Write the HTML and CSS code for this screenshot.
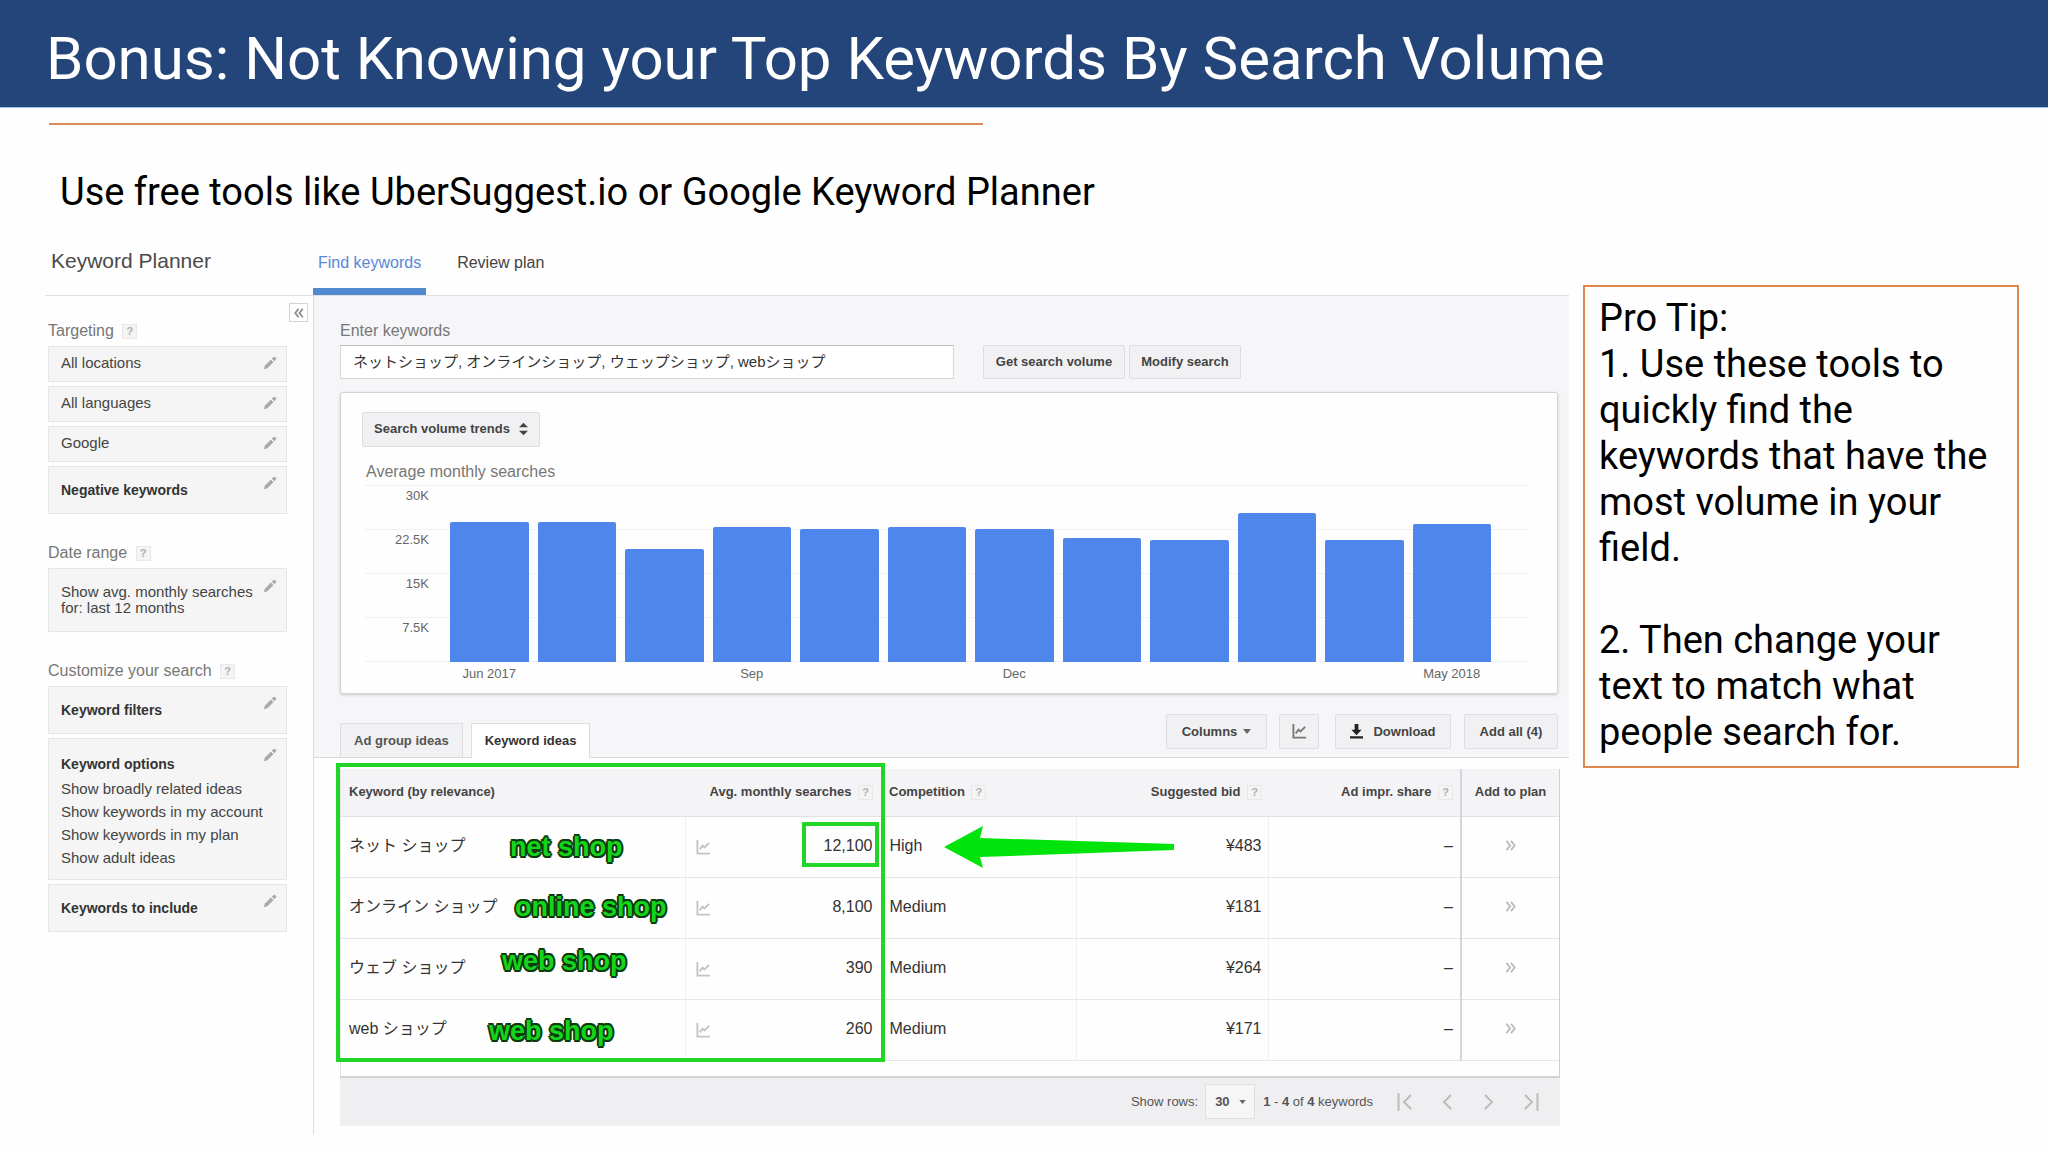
FILE: index.html
```html
<!DOCTYPE html>
<html lang="en">
<head>
<meta charset="utf-8">
<title>Bonus: Not Knowing your Top Keywords By Search Volume</title>
<link rel="stylesheet" href="styles.css">
</head>
<body>
<svg class="defs" aria-hidden="true">
  <symbol id="pencil" viewBox="0 0 16 16"><path d="M1 15l1-4 7-7 3 3-7 7zM10 3l2-2q1-.6 2 .3l.8.8q.8 1 0 1.8L13 6z"/></symbol>
  <symbol id="graph" viewBox="0 0 16 16"><path d="M1.500 0v14.500H15M4 10l3-4 2 2 5-5" fill="none" stroke="currentColor" stroke-width="2"/></symbol>
  <symbol id="caret" viewBox="0 0 8 5"><path d="M0 0h8L4 5z"/></symbol>
  <symbol id="plan" viewBox="0 0 12 12"><path d="M1 1l4 5-4 5M6 1l4 5-4 5" fill="none" stroke="currentColor" stroke-width="2"/></symbol>
</svg>

<header class="title-bar"><h1>Bonus: Not Knowing your Top Keywords By Search Volume</h1></header>
<hr class="rule">
<p class="subtitle">Use free tools like UberSuggest.io or Google Keyword Planner</p>

<div class="slide">
  <div class="planner">
    <div class="planner-head">
      <h2>Keyword Planner</h2>
      <nav class="tabs">
        <a class="tab current" href="#find">Find keywords</a>
        <a class="tab" href="#review">Review plan</a>
      </nav>
    </div>

    <aside class="sidebar">
      <button class="collapse" aria-label="Collapse"><svg viewBox="0 0 12 12"><path d="M5.500 1l-4 5 4 5M10.500 1l-4 5 4 5"/></svg></button>
      <section class="group">
        <h3>Targeting <span class="help">?</span></h3>
        <div class="box"><span>All locations</span><button class="edit" aria-label="Edit locations"><svg><use href="#pencil"/></svg></button></div>
        <div class="box"><span>All languages</span><button class="edit" aria-label="Edit languages"><svg><use href="#pencil"/></svg></button></div>
        <div class="box"><span>Google</span><button class="edit" aria-label="Edit network"><svg><use href="#pencil"/></svg></button></div>
        <div class="box tall"><b>Negative keywords</b><button class="edit" aria-label="Edit negative keywords"><svg><use href="#pencil"/></svg></button></div>
      </section>
      <section class="group">
        <h3>Date range <span class="help">?</span></h3>
        <div class="box range"><span>Show avg. monthly searches<br>for: last 12 months</span><button class="edit" aria-label="Edit date range"><svg><use href="#pencil"/></svg></button></div>
      </section>
      <section class="group">
        <h3>Customize your search <span class="help">?</span></h3>
        <div class="box tall"><b>Keyword filters</b><button class="edit" aria-label="Edit filters"><svg><use href="#pencil"/></svg></button></div>
        <div class="box options">
          <div><b>Keyword options</b>
            <ul><li>Show broadly related ideas</li><li>Show keywords in my account</li><li>Show keywords in my plan</li><li>Show adult ideas</li></ul>
          </div>
          <button class="edit" aria-label="Edit options"><svg><use href="#pencil"/></svg></button>
        </div>
        <div class="box tall"><b>Keywords to include</b><button class="edit" aria-label="Edit included keywords"><svg><use href="#pencil"/></svg></button></div>
      </section>
    </aside>

    <main class="main">
      <div class="panel">
        <label class="field-label" for="kw">Enter keywords</label>
        <div class="search">
          <input id="kw" type="text" value="ネットショップ, オンラインショップ, ウェップショップ, webショップ">
          <button class="btn">Get search volume</button>
          <button class="btn">Modify search</button>
        </div>

        <section class="card">
          <button class="btn trends">Search volume trends
            <svg viewBox="0 0 10 14"><path d="M0 5l5-5 5 5zM0 9l5 5 5-5z"/></svg></button>
          <h3>Average monthly searches</h3>
          <div class="chart">
            <div class="scale"><span>30K</span><span>22.5K</span><span>15K</span><span>7.5K</span></div>
            <div class="bars">
              <i style="height:79%"></i><i style="height:79%"></i><i style="height:64%"></i><i style="height:76%"></i><i style="height:75%"></i><i style="height:76%"></i><i style="height:75%"></i><i style="height:70%"></i><i style="height:69%"></i><i style="height:84%"></i><i style="height:69%"></i><i style="height:78%"></i>
            </div>
          </div>
          <div class="months"><span>Jun 2017</span><span></span><span></span><span>Sep</span><span></span><span></span><span>Dec</span><span></span><span></span><span></span><span></span><span>May 2018</span></div>
        </section>

        <div class="result-bar">
          <div class="result-tabs">
            <button class="rtab">Ad group ideas</button>
            <button class="rtab on">Keyword ideas</button>
          </div>
          <div class="tools">
            <button class="btn columns">Columns <svg class="caret"><use href="#caret"/></svg></button>
            <button class="btn icon-only" aria-label="Chart"><svg class="graph"><use href="#graph"/></svg></button>
            <button class="btn download"><svg class="down" viewBox="0 0 14 16"><path d="M5 0h4v6h3.500L7 12 1.500 6H5zM0 13h14v2.500H0z"/></svg>Download</button>
            <button class="btn add-all">Add all (4)</button>
          </div>
        </div>
      </div>

      <div class="results">
        <div class="table-wrap">
          <table>
            <colgroup><col><col class="c-avg"><col class="c-comp"><col class="c-bid"><col class="c-share"><col class="c-plan"></colgroup>
            <thead><tr>
              <th>Keyword (by relevance)</th>
              <th class="num">Avg. monthly searches <span class="help">?</span></th>
              <th class="comp">Competition <span class="help">?</span></th>
              <th class="num bid">Suggested bid <span class="help">?</span></th>
              <th class="num share">Ad impr. share <span class="help">?</span></th>
              <th class="plan">Add to plan</th>
            </tr></thead>
            <tbody>
              <tr><td>ネット ショップ<span class="note n1">net shop</span></td><td class="num"><svg class="graph"><use href="#graph"/></svg>12,100<span class="mark"></span></td><td class="comp">High<svg class="arrow" viewBox="0 0 230 42"><path d="M0 21L39 0l-3 12 194 6v6L36 31l3 11z"/></svg></td><td class="num bid">¥483</td><td class="num share">–</td><td class="plan"><svg><use href="#plan"/></svg></td></tr>
              <tr><td>オンライン ショップ<span class="note n2">online shop</span></td><td class="num"><svg class="graph"><use href="#graph"/></svg>8,100</td><td class="comp">Medium</td><td class="num bid">¥181</td><td class="num share">–</td><td class="plan"><svg><use href="#plan"/></svg></td></tr>
              <tr><td>ウェブ ショップ<span class="note n3">web shop</span></td><td class="num"><svg class="graph"><use href="#graph"/></svg>390</td><td class="comp">Medium</td><td class="num bid">¥264</td><td class="num share">–</td><td class="plan"><svg><use href="#plan"/></svg></td></tr>
              <tr><td>web ショップ<span class="note n4">web shop</span></td><td class="num"><svg class="graph"><use href="#graph"/></svg>260</td><td class="comp">Medium</td><td class="num bid">¥171</td><td class="num share">–</td><td class="plan"><svg><use href="#plan"/></svg></td></tr>
            </tbody>
          </table>
          <div class="frame"></div>
        </div>
        <div class="pager">
          <label for="rows">Show rows:</label>
          <span class="rows"><select id="rows"><option>30</option></select><svg class="caret"><use href="#caret"/></svg></span>
          <span class="count"><b>1</b> - <b>4</b> of <b>4</b> keywords</span>
          <span class="pages">
            <button aria-label="First page"><svg viewBox="0 0 16 18"><path d="M1.500 0v18M14 2L7 9l7 7"/></svg></button>
            <button aria-label="Previous page"><svg viewBox="0 0 16 18"><path d="M12 2L5 9l7 7"/></svg></button>
            <button aria-label="Next page"><svg viewBox="0 0 16 18"><path d="M4 2l7 7-7 7"/></svg></button>
            <button aria-label="Last page"><svg viewBox="0 0 16 18"><path d="M2 2l7 7-7 7M14.500 0v18"/></svg></button>
          </span>
        </div>
      </div>
    </main>
  </div>

  <aside class="tip">
    <p>Pro Tip:<br>1. Use these tools to quickly find the keywords that have the most volume in your field.</p>
    <p>2. Then change your text to match what people search for.</p>
  </aside>
</div>
</body>
</html>
```
FILE: styles.css
```css
* { box-sizing: border-box; }
body { margin: 0; background: #fdfefd; color: #000; font-family: Roboto, sans-serif; }
h1, h2, h3, p, ul { margin: 0; padding: 0; font-weight: 400; }
ul { list-style: none; }
button, input, select { font: inherit; color: inherit; margin: 0; padding: 0; }
button { border: 0; background: none; cursor: pointer; }
svg { fill: currentColor; flex: none; }
.defs { position: absolute; width: 0; height: 0; }

/* Slide */
.title-bar { background: #234579; border-bottom: 1px solid #9cc3ea; padding: 24px 46px 13px; }
.title-bar h1 { color: #fff; font-size: 60px; line-height: 70px; }
.rule { width: 934px; max-width: 90%; height: 2px; margin: 15px 0 0 49px; border: 0; background: #dd8b5b; }
.subtitle { margin: 44px 0 25px 60px; font-size: 38px; line-height: 46px; }
.slide { display: flex; align-items: flex-start; gap: 14px; padding: 0 29px 0 45px; }
.tip { width: 436px; flex: none; margin-top: 45px; padding: 8px 14px 11px; border: 2px solid #dd8851; font-size: 38px; line-height: 46px; }
.tip p + p { margin-top: 46px; }

/* Planner */
.planner { flex: 1; min-width: 0; display: grid; grid-template-columns: 269px minmax(0, 1fr); font-family: "Liberation Sans", "Noto Sans CJK JP", sans-serif; font-size: 16px; line-height: 20px; color: #444; }
.planner-head { grid-column: 1 / -1; display: flex; border-bottom: 1px solid #e0e1e4; }
.planner-head h2 { width: 268px; padding: 9px 0 0 6px; font-size: 21px; line-height: 24px; color: #4a4a4a; }
.tabs { display: flex; gap: 26px; }
.tab { padding: 13px 5px 15px; border-bottom: 7px solid transparent; color: #444; text-decoration: none; }
.tab.current { border-color: #5089d0; color: #5a86d8; }

.help { display: inline-block; width: 15px; height: 15px; border: 1px solid #e8e8e8; background: #f4f4f4; color: #b0b0b0; font-size: 11px; font-weight: 700; line-height: 13px; text-align: center; vertical-align: middle; }
h3 .help { margin-left: 4px; }

/* Sidebar */
.sidebar { position: relative; padding: 25px 26px 173px 3px; border-right: 1px solid #dcdcde; }
.collapse { position: absolute; top: 7px; right: 5px; width: 19px; height: 19px; display: grid; place-items: center; border: 1px solid #d4d4d4; }
.collapse svg { width: 10px; height: 10px; fill: none; stroke: #888; stroke-width: 2; }
.group { display: flex; flex-direction: column; gap: 4px; margin-bottom: 29px; }
.group h3 { margin-bottom: 1px; font-size: 16px; line-height: 20px; color: #777; white-space: nowrap; }
.box { display: flex; justify-content: space-between; align-items: center; min-height: 36px; padding: 0 9px 2px 12px; border: 1px solid #e6e6e6; background: #f4f5f4; font-size: 15px; line-height: 16px; white-space: nowrap; }
.box b { font-size: 14px; color: #333; }
.box.tall { min-height: 48px; padding-bottom: 0; }
.edit { width: 14px; height: 14px; color: #aaa; }
.edit svg { display: block; width: 14px; height: 14px; }
.tall .edit, .range .edit, .options .edit { align-self: flex-start; margin-top: 9px; }
.range { min-height: 64px; padding-top: 2px; }
.range .edit { margin-top: 8px; }
.options { min-height: 142px; padding: 6px 9px 0 12px; }
.options .edit { margin-top: 3px; }
.options ul { padding-top: 5px; line-height: 23px; }

/* Search panel */
.panel { padding: 25px 11px 0 26px; background: #f6f6f8; border-bottom: 1px solid #d9d9dc; }
.field-label { display: block; margin-bottom: 4px; color: #777; }
.search { display: flex; gap: 4px; margin-bottom: 13px; }
.search input { width: 614px; height: 34px; margin-right: 25px; padding: 0 12px 4px; border: 1px solid #d6d6d8; border-top-color: #c0c0c4; background: #fff; font-size: 15px; color: #333; }
.btn { display: flex; align-items: center; justify-content: center; height: 34px; padding: 0 10px; border: 1px solid #dedee0; border-radius: 2px; background: #f1f1f3; font-size: 13px; font-weight: 700; color: #444; white-space: nowrap; }
.search .btn { width: 112px; }
.search input + .btn { width: 142px; }
.card { padding: 19px 21px 9px; border: 1px solid #d4d4d8; border-radius: 3px; background: #fefefe; box-shadow: 0 1px 3px #c8c8cc; }
.trends { width: 178px; height: 35px; gap: 9px; padding-bottom: 2px; }
.trends svg { width: 9px; height: 14px; }
.card h3 { margin: 15px 0 3px 4px; font-size: 16px; line-height: 20px; color: #777; }
.chart { display: grid; margin: 0 7px 0 3px; }
.scale, .bars { grid-area: 1 / 1; }
.scale { border-bottom: 1px solid #f1f1f3; }
.scale span { display: block; height: 44px; padding-right: calc(100% - 64px); border-top: 1px solid #f1f1f3; font-size: 13px; line-height: 20px; color: #666; text-align: right; }
.bars, .months { display: grid; grid-template-columns: repeat(12, minmax(0, 1fr)); column-gap: 9px; padding: 0 38px 0 85px; }
.bars { align-items: end; }
.bars i { background: #4f86ec; border-radius: 2px 2px 0 0; }
.months { margin: 2px 7px 0 3px; font-size: 13px; line-height: 20px; color: #666; text-align: center; white-space: nowrap; }
.result-bar { display: flex; justify-content: space-between; align-items: flex-end; padding-top: 20px; }
.result-tabs { display: flex; gap: 8px; }
.rtab { height: 34px; padding: 0 13px; border: 1px solid #dedee0; border-bottom: 0; background: #f1f1f3; font-size: 13px; font-weight: 700; color: #555; }
.rtab.on { margin-bottom: -1px; height: 35px; background: #fff; color: #333; }
.tools { display: flex; margin-bottom: 8px; }
.tools .btn { height: 35px; }
.caret { width: 8px; height: 5px; color: #666; }
.columns { width: 101px; gap: 6px; margin-right: 12px; }
.icon-only { width: 40px; margin-right: 16px; }
.graph { width: 15px; height: 15px; color: #777; }
.download { width: 116px; gap: 10px; margin-right: 13px; }
.down { width: 13px; height: 15px; color: #222; }
.add-all { width: 94px; }

/* Results */
.results { padding: 11px 9px 0 26px; }
.table-wrap { position: relative; padding-bottom: 15px; border-left: 1px solid #e4e4e6; border-right: 1px solid #cfcfd3; }
table { width: 100%; table-layout: fixed; border-collapse: collapse; background: #fefefe; }
.c-avg { width: 199px; }
.c-comp { width: 192px; }
.c-bid { width: 192px; }
.c-share { width: 193px; }
.c-plan { width: 98px; }
th { height: 47px; padding: 0 0 0 8px; background: #f4f3f5; border-bottom: 1px solid #e2e2e5; font-size: 13px; text-align: left; color: #444; white-space: nowrap; }
td { position: relative; height: 61px; padding: 0 0 2px 8px; border-bottom: 1px solid #e6e6e8; border-right: 1px solid #f0f0f2; font-size: 16px; color: #333; white-space: nowrap; }
th .help { margin-left: 3px; }
.num { padding-left: 0; padding-right: 11px; text-align: right; }
.num.bid { padding-right: 6px; }
.num.share { padding-right: 7px; border-right: 2px solid #d6d6da; }
.comp { padding-left: 5px; }
.plan { padding-left: 0; text-align: center; }
td.plan { border-right: 0; }
td.plan svg { width: 12px; height: 11px; color: #bbb; }
td .graph { position: absolute; left: 10px; top: 23px; color: #c4c4c4; }
.note { position: absolute; font-size: 27px; font-weight: 700; line-height: 30px; color: #14d41c; text-shadow: 2px 0 #0b3a0c, -2px 0 #0b3a0c, 0 2px #0b3a0c, 0 -2px #0b3a0c, 1px 2px #0b3a0c, -1px 2px #0b3a0c, 1px -2px #0b3a0c, -1px -2px #0b3a0c; }
.n1 { left: 169px; top: 15px; }
.n2 { left: 174px; top: 14px; }
.n3 { left: 161px; top: 7px; }
.n4 { left: 148px; top: 16px; }
.mark { position: absolute; right: 5px; top: 5px; width: 77px; height: 45px; border: 4px solid #22d628; }
.arrow { position: absolute; z-index: 1; left: 59px; top: 9px; width: 230px; height: 42px; color: #00e40b; }
.frame { position: absolute; left: -5px; right: 674px; top: -6px; bottom: 14px; border: 4px solid #22d628; pointer-events: none; }
.pager { display: flex; align-items: center; justify-content: flex-end; height: 50px; padding: 0 21px; border-top: 2px solid #d2d2d5; background: #efeef0; font-size: 13px; color: #555; }
.rows { position: relative; margin: 0 8px 0 7px; }
.rows select { appearance: none; width: 50px; height: 35px; padding: 0 9px; border: 1px solid #e0e0e2; border-radius: 0; background: #f6f6f7; font-weight: 700; }
.rows .caret { position: absolute; right: 9px; top: 16px; width: 7px; height: 4px; }
.count { margin-right: 24px; }
.pages { display: flex; gap: 26px; }
.pages svg { display: block; width: 16px; height: 18px; fill: none; stroke: #bbb; stroke-width: 2; }
```
